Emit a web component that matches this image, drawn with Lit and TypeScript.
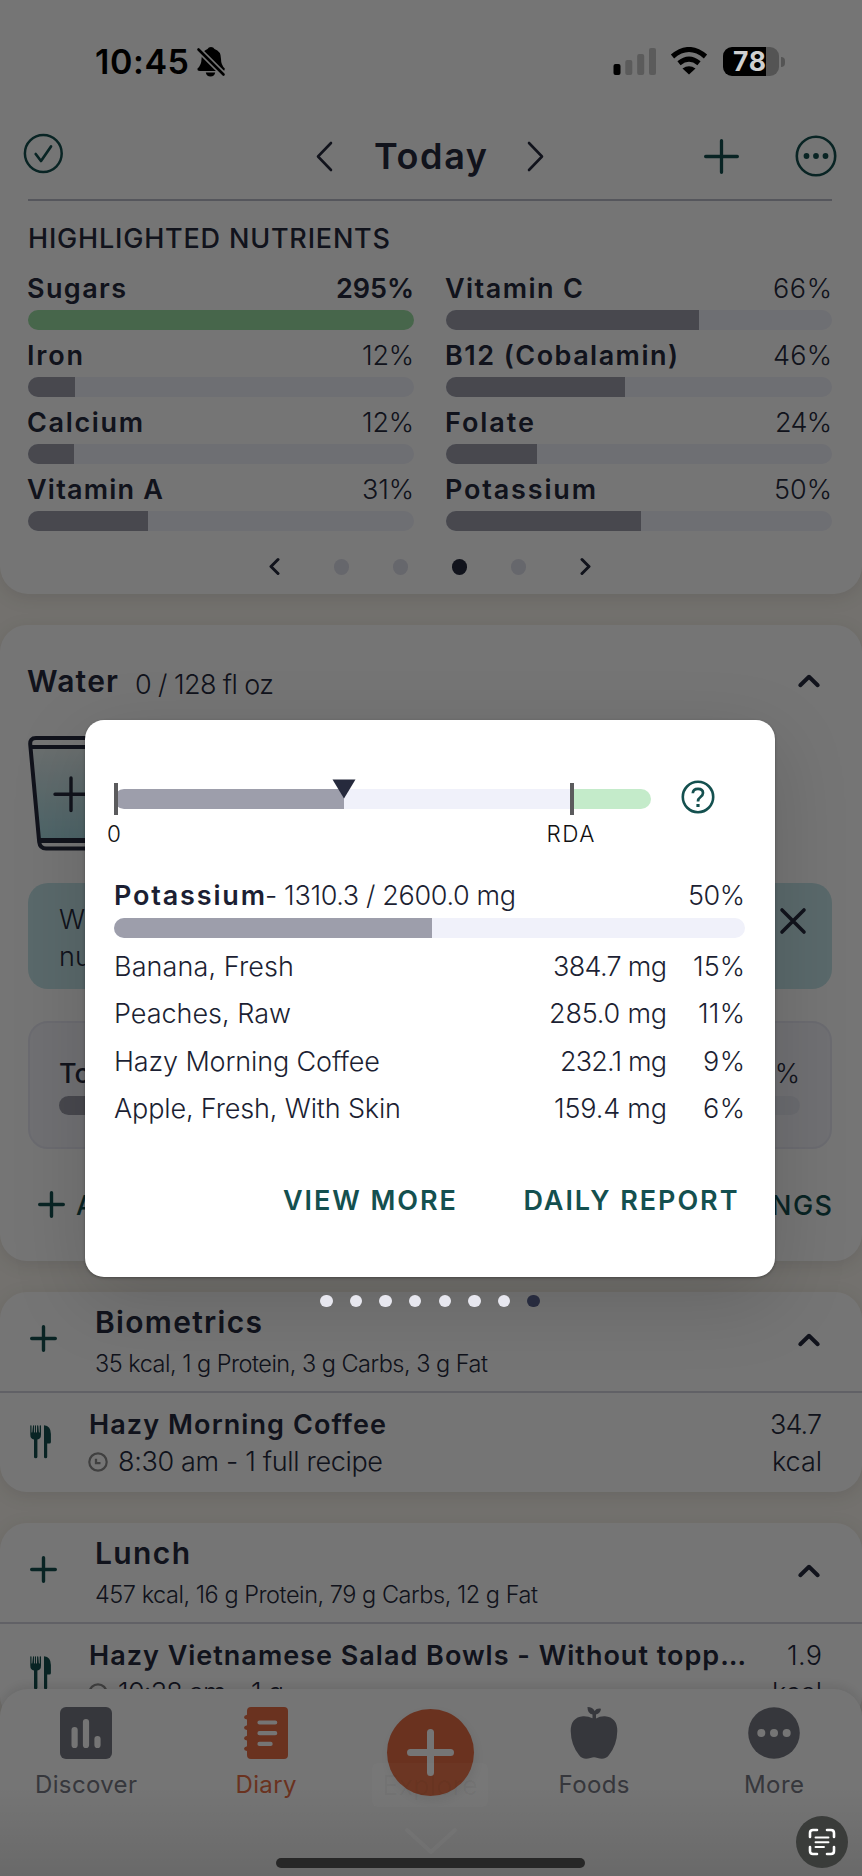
import { LitElement, html, css } from "lit";
import { customElement, property } from "lit/decorators.js";
import { styleMap } from "lit/directives/style-map.js";

/** One line of text, tracked so that it spans a given width. */
@customElement("fit-text")
class FitText extends LitElement {
  @property({ type: Number }) span = 0;
  @property() text = "";
  static styles = css`
    :host { display: inline-block; white-space: nowrap; }
    .t { display: inline-block; white-space: pre; font-feature-settings: "liga" 0, "calt" 0; }
  `;
  render() {
    return html`<span class="t">${this.text}</span>`;
  }
  updated() {
    const el = this.renderRoot.querySelector(".t") as HTMLElement;
    const n = this.text.length;
    if (!this.span || n < 2) return;
    el.style.letterSpacing = "0px";
    const ls = (this.span - el.getBoundingClientRect().width) / (n - 1);
    el.style.letterSpacing = ls + "px";
    el.style.marginRight = -ls + "px";
  }
}

const t = (text: string, span = 0, cls = "") =>
  html`<fit-text class=${cls} .text=${text} .span=${span}></fit-text>`;

const plus = (size: number, w: number) => html`<svg width=${size} height=${size} viewBox="0 0 ${size} ${size}">
  <path d="M${size / 2} ${w / 2}V${size - w / 2}M${w / 2} ${size / 2}H${size - w / 2}" fill="none" stroke="currentColor" stroke-width=${w} stroke-linecap="round"/></svg>`;
const chevUp = html`<svg width="24" height="16" viewBox="0 0 24 16"><path d="M3.3 12.2L12 3.8L20.7 12.2" fill="none" stroke="currentColor" stroke-width="4" stroke-linecap="round" stroke-linejoin="round"/></svg>`;
const chevron = (d: string, w: number, h: number, s: number) =>
  html`<svg width=${w} height=${h} viewBox="0 0 ${w} ${h}"><path d=${d} fill="none" stroke="currentColor" stroke-width=${s} stroke-linecap="round" stroke-linejoin="round"/></svg>`;
const cutlery = html`<svg class="teal" width="22" height="34" viewBox="0 0 22 34"><path fill="currentColor" d="M.3 .8Q.3 .3 .9 .3Q1.500 .3 1.500 .8V7.200Q1.900 7.900 2.300 7.200L3 .8Q3.100 .3 3.600 .3Q4.100 .3 4.100 .8V7.200Q4.500 7.900 5 7.200V.8Q5 .3 5.500 .3Q6 .3 6 .8V7.200Q6.500 7.900 7 7.200L7.100 .8Q7.100 .3 7.600 .3Q8.200 .3 8.300 .8L8.900 7.200Q9.300 7.900 9.700 7.200V.8Q9.800 .3 10.300 .3Q11 .3 11 .8V9.500Q11 14 7.400 14.600V32Q7.400 33.300 5.700 33.300Q4 33.300 4 32V14.600Q.3 14 .3 9.500ZM14 .3Q20.900 1 20.900 9V17Q20.900 18.500 19.500 18.500H17.200V32Q17.200 33.300 15.600 33.300Q14 33.300 14 32Z"/></svg>`;
const clock = html`<svg width="20" height="20" viewBox="0 0 20 20"><circle cx="10" cy="10" r="8.700" fill="none" stroke="#8c8c8c" stroke-width="2.200"/><path d="M8 6.800V11.200H12.500" fill="none" stroke="#8c8c8c" stroke-width="2.300"/></svg>`;

const nutrients: [string, number, string, number, number][] = [
  ["Sugars", 99, "295%", 78, 100], ["Vitamin C", 138, "66%", 59, 65.6],
  ["Iron", 56, "12%", 52, 12.3], ["B12 (Cobalamin)", 233, "46%", 59, 46.3],
  ["Calcium", 116, "12%", 52, 12], ["Folate", 89, "24%", 57, 23.6],
  ["Vitamin A", 136, "31%", 52, 31.1], ["Potassium", 151, "50%", 58, 50.4],
];
const sources: [string, number, string, number, string, number][] = [
  ["Banana, Fresh", 180, "384.7 mg", 114, "15%", 52],
  ["Peaches, Raw", 177, "285.0 mg", 118, "11%", 47],
  ["Hazy Morning Coffee", 266, "232.1 mg", 107, "9%", 42],
  ["Apple, Fresh, With Skin", 287, "159.4 mg", 113, "6%", 42],
];

@customElement("app-root")
class AppRoot extends LitElement {
  static styles = css`
    :host { display: block; position: relative; width: 862px; height: 1876px; overflow: hidden; background: #faf6ef; color: #262a3d; font-family: Inter, "Noto Sans", sans-serif; font-size: 27px; line-height: 34px; }
    * { box-sizing: border-box; }
    svg { display: block; flex: none; }
    fit-text { flex: none; }
    .page { display: flex; flex-direction: column; gap: 31px; }
    .card { background: #fff; border-radius: 27px; box-shadow: 0 4px 18px rgba(60, 55, 50, .12); flex: none; }
    .teal { color: #14504f; }
    .light { font-weight: 300; }
    .semi { font-weight: 560; }
    .med { font-weight: 480; }
    .row { display: flex; align-items: center; }
    .between { display: flex; justify-content: space-between; }
    .track { height: 19.5px; border-radius: 10px; background: #f0f1fa; overflow: hidden; }
    .fill { height: 100%; background: #9d9eab; }
    .fill.done { background: #9cdea3; }

    .summary { height: 593.5px; padding-top: 110px; border-radius: 0 0 28px 28px; }
    .header { height: 89px; padding-left: 23px; padding-top: 3px; }
    .header .check { margin-top: -5px; }
    .header .prev { margin-left: 252px; }
    .today { font-size: 36px; line-height: 44px; font-weight: 600; margin-left: 41px; }
    .header .next { margin-left: 40px; }
    .header .add { margin-left: 160px; }
    .header .more { margin-left: 56px; }
    .body { margin: 0 30px 0 28px; border-top: 2px solid #babbc9; padding-top: 21px; }
    .title { height: 34px; }
    .nutrients { display: grid; grid-template-columns: 1fr 1fr; column-gap: 32px; row-gap: 8.1px; margin-top: 15.5px; }
    .nutrient .between { margin-left: -1px; height: 34px; margin-bottom: 4.5px; }
    .nutrient { padding-bottom: 1px; }
    .pager { display: flex; align-items: center; justify-content: center; height: 32px; margin-top: 19px; }
    .pager i { width: 15.6px; height: 15.6px; border-radius: 50%; background: #dfe0eb; margin-right: 43.5px; }
    .pager i.on { background: #262a3d; }
    .pager .first { margin-right: 54px; }
    .pager .last { margin-left: 10.5px; }

    .water { height: 636px; padding: 39px 30px 0 28px; }
    .water-head { height: 34px; }
    .h { font-size: 30px; font-weight: 560; }
    .water-head .h { margin-left: -1px; }
    .water-head .amount { margin: 8px auto 0 17px; }
    .water-head svg { margin: 0 11px 0 0; }
    .glass { margin-top: 37px; }
    .notice { height: 106px; margin-top: 30px; border-radius: 20px; background: #c4e5e9; padding: 18px 25px 0 31px; line-height: 37px; display: flex; justify-content: space-between; }
    .notice svg { margin-top: 6px; }
    .total { height: 128px; margin-top: 32px; border: 2px solid #e9eaf5; border-radius: 20px; background: #f3f3fa; padding: 34px 30px 0 29px; }
    .total .between { margin-bottom: 5px; }
    .total .fill { width: 45%; }
    .total .track { background: #e8e9f2; }
    .actions { height: 34px; margin-top: 40px; padding-left: 10px; }
    .actions > svg { margin-top: -2px; }
    .actions .a { margin: 0 auto 0 11px; }

    .meal { height: 200px; }
    .meal-head { height: 99.5px; padding: 14px 41px 0 30px; display: flex; align-items: center; }
    .meal-head .add { margin-top: -19px; }
    .meal-head .up { margin-top: -17px; }
    .names { margin: 0 auto 0 38px; height: 86px; }
    .names .h { display: block; height: 36px; }
    .sub { display: block; font-size: 23.5px; font-weight: 300; margin-top: 6px; }
    .entry { border-top: 2px solid #d3d4de; padding: 12.5px 40px 0 30px; display: flex; align-items: flex-start; }
    .entry > svg { margin-top: 19px; }
    .entry .desc { margin: 0 auto 0 37px; line-height: 37.5px; }
    .entry .cals { text-align: right; font-weight: 300; line-height: 37.5px; display: flex; flex-direction: column; align-items: flex-end; }
    .when { display: flex; align-items: center; gap: 10px; margin-left: -1px; }

    .nav { position: absolute; left: 0; right: 0; top: 1689px; bottom: 0; background: #fff; border-radius: 28px 28px 0 0; box-shadow: 0 -2px 12px rgba(0, 0, 0, .12); display: grid; grid-template-columns: 172px 188px 140px 188px 172px; padding-top: 18px; }
    .tab { display: flex; flex-direction: column; align-items: center; gap: 9px; font-size: 24px; font-weight: 400; color: #777984; }
    .tab.sel { color: #e86d45; }
    .fab { width: 87px; height: 87px; border-radius: 50%; background: #e86d45; color: #fff; display: flex; align-items: center; justify-content: center; margin-top: 2px; box-shadow: 2px 4px 12px rgba(0, 0, 0, .08); }

    .scrim { position: absolute; inset: 0; background: rgba(0, 0, 0, .54); }
    .fade { position: absolute; left: 0; right: 0; bottom: 0; height: 90px; background: linear-gradient(rgba(0, 0, 0, 0), rgba(0, 0, 0, .1)); }
    .ghost { position: absolute; left: 372px; top: 1763px; width: 116px; height: 44px; border-radius: 6px; background: rgba(255, 255, 255, .02); color: rgba(0, 0, 0, .04); font-size: 27px; line-height: 46px; text-align: center; }
    .ghost-chev { position: absolute; left: 403px; top: 1826px; color: rgba(255, 255, 255, .03); }
    .status { position: absolute; left: 0; right: 0; top: 0; height: 110px; padding: 13px 77px 0 95px; display: flex; align-items: center; color: #000; }
    .time { font-size: 34px; font-weight: 560; line-height: 40px; }
    .status .bell { margin: 0 auto 0 7px; }
    .status .sig { margin-right: 13px; }
    .status .wifi { margin-right: 15px; }
    .battery { width: 56px; height: 29px; border-radius: 9px; background: linear-gradient(90deg, #000 43px, #545454 43px); color: #cfcfcf; font-size: 26.5px; line-height: 29px; font-weight: 700; padding-left: 10px; }
    .nub { width: 4px; height: 10px; margin-left: 2px; border-radius: 0 4px 4px 0; background: #545454; }

    .modal { position: absolute; left: 84.5px; top: 720px; width: 690.5px; height: 556.5px; border-radius: 19px; background: #fff; box-shadow: 0 22px 76px rgba(0, 0, 0, .15), 0 1px 3px rgba(0, 0, 0, .3); padding: 59px 30px 0 29.5px; color: #1c1f33; }
    .scale { display: flex; height: 36px; align-items: flex-start; }
    .gauge { position: relative; width: 536.5px; height: 20px; margin-top: 10px; border-radius: 10px; background: linear-gradient(90deg, #9d9eab 230px, #f0f1fa 230px, #f0f1fa 457px, #c4ebca 457px); }
    .tick { position: absolute; top: -6px; width: 4px; height: 31.5px; background: #5b5b5d; }
    .tick.zero { left: 0; }
    .tick.rda { left: 456px; }
    .mark { position: absolute; left: 218px; top: -10px; }
    .help { margin: 1px 0 0 30.5px; }
    .ends { display: flex; justify-content: space-between; height: 30px; line-height: 30px; font-size: 22.5px; font-weight: 330; margin-top: 4px; padding: 0 150.5px 0 0; margin-left: -7px; color: #111; }
    .detail { margin-top: 29.5px; height: 34px; display: flex; }
    .detail .pct { margin-left: auto; }
    .modal .track { margin-top: 5.5px; }
    .list { margin-top: 6px; font-weight: 300; }
    .item { display: grid; grid-template-columns: 1fr 120px 78px; height: 47.3px; align-items: center; justify-items: end; }
    .item :first-child { justify-self: start; }
    .buttons { display: flex; justify-content: flex-end; gap: 67.5px; padding-right: 7.5px; margin-top: 51.5px; font-weight: 640; }
    .pages { position: absolute; left: 320.3px; top: 1294.8px; display: flex; gap: 17.2px; }
    .pages i { width: 12.4px; height: 12.4px; border-radius: 50%; background: #e7e7ef; }
    .pages i.on { background: #272b3e; }
    .home { position: absolute; left: 275.5px; top: 1858px; width: 309.5px; height: 10px; border-radius: 5px; background: #272727; }
    .scan { position: absolute; left: 796px; top: 1816px; width: 52px; height: 52px; border-radius: 50%; background: #3a3c3a; padding: 12px; }
  `;

  private meal(name: string, w: number, sub: string, sw: number, item: string, iw: number, when: string, ww: number, cals: string, cw: number) {
    return html`<section class="card meal">
      <div class="meal-head"><span class="teal add">${plus(27, 3.4)}</span>
        <div class="names">${t(name, w, "h")}${t(sub, sw, "sub")}</div>
        <span class="up">${chevUp}</span></div>
      <div class="entry">${cutlery}
        <div class="desc"><div>${t(item, iw, "semi")}</div><div class="when">${clock}${t(when, ww, "light")}</div></div>
        <div class="cals">${t(cals, cw)}${t("kcal", 50)}</div></div>
    </section>`;
  }

  render() {
    return html`
    <div class="page">
      <section class="card summary">
        <div class="header row">
          <svg class="teal check" width="41" height="41" viewBox="0 0 41 41"><circle cx="20.300" cy="20.500" r="18.400" fill="none" stroke="currentColor" stroke-width="2.500"/><path d="M12.700 21L18 28L28 13.400" fill="none" stroke="currentColor" stroke-width="2.700" stroke-linecap="round" stroke-linejoin="round"/></svg>
          <span class="prev">${chevron("M15 2L2 15.5L15 29", 17, 31, 2.6)}</span>
          ${t("Today", 113, "today")}
          <span class="next">${chevron("M2 2L15 15.5L2 29", 17, 31, 2.6)}</span>
          <span class="teal add">${plus(35, 3.3)}</span>
          <svg class="teal more" width="42" height="42" viewBox="0 0 42 42"><circle cx="21" cy="21" r="19.200" fill="none" stroke="currentColor" stroke-width="2.600"/><g fill="currentColor"><circle cx="11.500" cy="21" r="2.900"/><circle cx="21" cy="21" r="2.900"/><circle cx="30.500" cy="21" r="2.900"/></g></svg>
        </div>
        <div class="body">
          <div class="title med">${t("HIGHLIGHTED NUTRIENTS", 362)}</div>
          <div class="nutrients">${nutrients.map(([n, w, p, pw, v]) => html`<div class="nutrient">
            <div class="between">${t(n, w, "semi")}${t(p, pw, v === 100 ? "semi" : "light")}</div>
            <div class="track"><div class="fill ${v === 100 ? "done" : ""}" style=${styleMap({ width: v + "%" })}></div></div></div>`)}</div>
          <div class="pager"><span class="first">${chevron("M10 2.5L3 9.5L10 16.5", 12, 19, 3)}</span><i></i><i></i><i class="on"></i><i></i><span class="last">${chevron("M2 2.5L9 9.5L2 16.5", 12, 19, 3)}</span></div>
        </div>
      </section>

      <section class="card water">
        <div class="row water-head">${t("Water", 91, "h")}${t("0 / 128 fl oz", 139, "light amount")}${chevUp}</div>
        <svg class="glass" width="100" height="118" viewBox="28 735 100 118">
          <defs><linearGradient id="w" x1="0" y1="0" x2="0" y2="1"><stop offset="0" stop-color="#e6f0f0"/><stop offset="1" stop-color="#a9dbe3"/></linearGradient></defs>
          <path d="M33 749H121L112 838H40Z" fill="url(#w)"/>
          <g fill="none" stroke="#262a3d" stroke-width="4"><path d="M30.300 745Q29.500 738 36 738H118Q124.500 738 124 745L114.500 842Q113.500 848.500 107 848.500H46Q40 848.500 39.200 842Z"/><path d="M31 747H123"/><path d="M39 840.500H115" stroke-width="4.800"/></g>
          <path d="M71 778V810.500M55 794.300H87" fill="none" stroke="#262a3d" stroke-width="3.400" stroke-linecap="round"/>
        </svg>
        <div class="notice light"><div>${t("W")}<br>${t("nu")}</div>
          <svg width="28" height="28" viewBox="0 0 28 28"><path d="M3 3L25 25M25 3L3 25" stroke="currentColor" stroke-width="3.600" stroke-linecap="round"/></svg></div>
        <div class="total"><div class="between">${t("To", 0, "med")}${t("%", 0, "light")}</div><div class="track"><div class="fill"></div></div></div>
        <div class="row actions teal med">${plus(27, 3.4)}${t("A", 0, "a")}${t("NGS", 61)}</div>
      </section>

      ${this.meal("Biometrics", 167, "35 kcal, 1 g Protein, 3 g Carbs, 3 g Fat", 393, "Hazy Morning Coffee", 297, "8:30 am - 1 full recipe", 265, "34.7", 52)}
      ${this.meal("Lunch", 95, "457 kcal, 16 g Protein, 79 g Carbs, 12 g Fat", 443, "Hazy Vietnamese Salad Bowls - Without topp…", 657, "10:38 am - 1 g", 166, "1.9", 35)}
    </div>

    <nav class="nav">
      <div class="tab"><svg width="52" height="52" viewBox="0 0 52 52"><rect width="52" height="52" rx="6" fill="currentColor"/><path d="M14.600 23V38M26 15V38M37.500 32V38" stroke="#fff" stroke-width="6.200" stroke-linecap="round"/></svg>${t("Discover", 102)}</div>
      <div class="tab sel"><svg width="44" height="52" viewBox="0 0 44 52"><path fill="currentColor" d="M7 0H40Q44 0 44 4V48Q44 52 40 52H7Q3 52 3 48V44Q0 43.500 0 41.700Q0 40 3 39.300V33.500Q0 33 0 31.200Q0 29.500 3 28.800V23Q0 22.500 0 20.700Q0 19 3 18.300V12.500Q0 12 0 10.200Q0 8.500 3 7.800V4Q3 0 7 0Z"/><path d="M15.500 15.500H31.200M15.500 26.200H31.200M15.500 36.900H26.600" stroke="#fff" stroke-width="4.200" stroke-linecap="round"/></svg>${t("Diary", 61)}</div>
      <div class="tab"><div class="fab">${plus(47, 7)}</div></div>
      <div class="tab"><svg width="48" height="52" viewBox="0 0 48 52"><path fill="currentColor" d="M17.500 0Q22.800 0 24.600 4Q26.500 1 31 1.700Q30.500 6.500 26 7.500V11.500Q30 9 35 9.300Q47.300 10.500 47.300 24Q47 38 39 48Q35 53.500 27.500 51Q24 49.700 20.500 51Q13 53.500 9 48Q1 38 .7 24Q.7 10.500 13 9.300Q18 9 22.500 11.300V7.500Q17.300 6.500 17.500 0Z"/></svg>${t("Foods", 71)}</div>
      <div class="tab"><svg width="52" height="52" viewBox="0 0 52 52"><circle cx="26" cy="26" r="25.800" fill="currentColor"/><g fill="#fff"><circle cx="13.300" cy="26" r="4"/><circle cx="26" cy="26" r="4"/><circle cx="38.700" cy="26" r="4"/></g></svg>${t("More", 60)}</div>
    </nav>

    <div class="scrim"></div>
    <div class="fade"></div>
    <div class="ghost">Explore</div>
    <span class="ghost-chev">${chevron("M4 4L28 26L52 4", 56, 30, 4)}</span>

    <div class="status">
      ${t("10:45", 94, "time")}
      <svg class="bell" width="30" height="32" viewBox="0 0 30 32"><path fill="#000" d="M15 1Q17.500 1 18.500 3Q25 5 25 13Q25 19 28.800 22.500Q29 25.500 26 25H4Q1 25 1.500 22.500Q5.500 19 5.500 13Q5.500 5 11.500 3Q12.500 1 15 1ZM9.800 26.500H19.200Q18.500 30.500 14.500 30.500Q10.500 30.500 9.800 26.500Z"/><path d="M2 3L28.500 29.500" stroke="#757575" stroke-width="6"/><path d="M2.500 3.500L27.500 28.500" stroke="#000" stroke-width="2.600" stroke-linecap="round"/></svg>
      <svg class="sig" width="44" height="29" viewBox="0 0 44 29"><rect x=".5" y="17" width="7" height="11" rx="2"/><g fill="#5b5b5b"><rect x="12.300" y="13" width="7" height="15" rx="2"/><rect x="24.200" y="7" width="7" height="21" rx="2"/><rect x="36" y="1" width="7" height="27" rx="2"/></g></svg>
      <svg class="wifi" width="38" height="29" viewBox="0 0 38 29"><path d="M2.500 9.500Q19 -4.500 35.500 9.500M9 16.200Q19 8 29 16.200" fill="none" stroke="#000" stroke-width="5"/><path d="M19 27.500L12.500 21.500Q19 17 25.500 21.500Z"/></svg>
      <div class="battery">${t("78", 33)}</div><div class="nub"></div>
    </div>

    <div class="modal">
      <div class="scale"><div class="gauge"><i class="tick zero"></i><i class="tick rda"></i>
        <svg class="mark" width="24" height="20" viewBox="0 0 24 20"><path d="M.5 .5H23.500L12 19.500Z" fill="#262a3d"/></svg></div>
        <svg class="help teal" width="34" height="34" viewBox="0 0 34 34"><circle cx="17" cy="17" r="15.200" fill="none" stroke="currentColor" stroke-width="2.600"/><path d="M11.800 13.200Q12 8.800 17 8.800Q22 8.800 22 13Q22 15 19.500 17Q17 18.800 17 21.500" fill="none" stroke="currentColor" stroke-width="2.700"/><rect x="15.400" y="24" width="3.200" height="3" fill="currentColor"/></svg></div>
      <div class="ends">${t("0")}${t("RDA", 48)}</div>
      <div class="detail">${t("Potassium", 151, "semi")}${t("- 1310.3 / 2600.0 mg", 251, "light")}${t("50%", 57, "light pct")}</div>
      <div class="track"><div class="fill" style=${styleMap({ width: "50.4%" })}></div></div>
      <div class="list">${sources.map(([n, nw, m, mw, p, pw]) => html`<div class="item">${t(n, nw)}${t(m, mw)}${t(p, pw)}</div>`)}</div>
      <div class="buttons teal">${t("VIEW MORE", 173)}${t("DAILY REPORT", 214)}</div>
    </div>
    <div class="pages">${[0, 1, 2, 3, 4, 5, 6, 7].map((i) => html`<i class=${i === 7 ? "on" : ""}></i>`)}</div>
    <div class="home"></div>
    <div class="scan"><svg width="28" height="28" viewBox="0 0 28 28"><path d="M2 9V5Q2 2 5 2H9M19 2H23Q26 2 26 5V9M26 19V23Q26 26 23 26H19M9 26H5Q2 26 2 23V19" fill="none" stroke="#fff" stroke-width="2.600" stroke-linecap="round"/><path d="M7.500 9.500H20.500M7.500 14.300H20.500M7.500 19H16" stroke="#fff" stroke-width="1.900" stroke-linecap="round"/></svg></div>
    `;
  }
}
